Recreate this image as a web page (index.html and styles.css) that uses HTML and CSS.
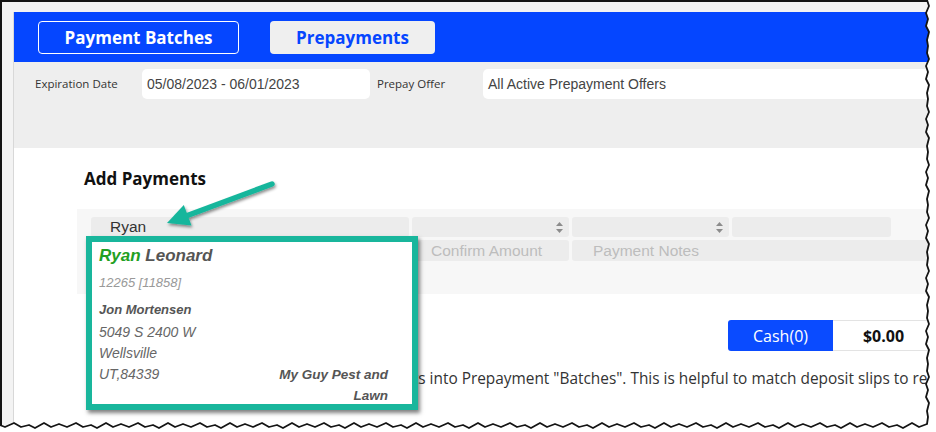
FILE: index.html
```html
<!DOCTYPE html>
<html>
<head>
<meta charset="utf-8">
<link rel="stylesheet" href="styles.css">
</head>
<body>
<div class="shot">
  <div class="window">
    <div class="app">
      <header class="topbar">
        <button class="tab tab-outline">Payment Batches</button>
        <button class="tab tab-active">Prepayments</button>
      </header>
      <div class="filters">
        <span class="flabel lbl-exp">Expiration Date</span>
        <div class="finput date">05/08/2023 - 06/01/2023</div>
        <span class="flabel lbl-offer">Prepay Offer</span>
        <div class="finput offer">All Active Prepayment Offers</div>
      </div>
      <section class="content">
        <h2 class="title">Add Payments</h2>
        <div class="grid">
          <div class="cell">Ryan</div>
          <div class="cell select"><svg class="sort" viewBox="0 0 7 11" width="7" height="11"><path d="M3.5 0 L7 4 L0 4 Z M3.5 11 L7 7 L0 7 Z" fill="#8c8c8c"/></svg></div>
          <div class="cell select"><svg class="sort" viewBox="0 0 7 11" width="7" height="11"><path d="M3.5 0 L7 4 L0 4 Z M3.5 11 L7 7 L0 7 Z" fill="#8c8c8c"/></svg></div>
          <div class="cell"></div>
          <div class="cell row2"></div>
          <div class="cell ph">Confirm Amount</div>
          <div class="cell ph notes">Payment Notes</div>
        </div>
        <div class="totals">
          <div class="cash">Cash(0)</div>
          <div class="sum">$0.00</div>
        </div>
        <p class="note">Enter prepayments here and group payments into Prepayment "Batches". This is helpful to match deposit slips to records.</p>
      </section>
    </div>
  </div>

  <div class="popup">
    <div class="p-name"><span class="p-first">Ryan</span> Leonard</div>
    <div class="p-id">12265 [11858]</div>
    <div class="p-contact">Jon Mortensen</div>
    <div class="p-line p-addr">5049 S 2400 W</div>
    <div class="p-line">Wellsville</div>
    <div class="p-last">
      <div class="p-line">UT,84339</div>
      <div class="p-company">My Guy Pest and Lawn</div>
    </div>
  </div>

  <svg class="overlay" viewBox="0 0 936 432" width="936" height="432">
    <defs>
      <filter id="sh" x="-20%" y="-20%" width="140%" height="160%">
        <feDropShadow dx="1" dy="2" stdDeviation="1.5" flood-color="#000" flood-opacity="0.45"/>
      </filter>
    </defs>
    <g filter="url(#sh)">
      <line x1="272" y1="184" x2="186" y2="216" stroke="#19b69c" stroke-width="5.5" stroke-linecap="round"/>
      <polygon points="167,223 191.5,225.6 183.8,205" fill="#19b69c"/>
    </g>
    <path class="tear-fill" d="M927,0 l2,6 -3,7 2,6 -2,7 3,6 -2,8 1,6 -1,7 2,6 -3,7 2,6 -2,7 3,6 -2,8 1,6 -1,7 2,6 -3,7 2,6 -2,7 3,6 -2,8 1,6 -1,7 2,6 -3,7 2,6 -2,7 3,6 -2,8 1,6 -1,7 2,6 -3,7 2,6 -2,7 3,6 -2,8 1,6 -1,7 2,6 -3,7 2,6 -2,7 3,6 -2,8 1,6 -1,7 2,6 -3,7 2,6 -2,7 3,6 -2,8 1,6 -1,7 2,6 -3,7 2,6 -2,7 3,6 -2,8 1,6 -1,7 l-8,3 -7,-4 -9,5 -6,-3 -8,2 -7,-4 -9,4 -8,-3 -8,3 -7,-4 -9,5 -6,-3 -8,2 -7,-4 -9,4 -8,-3 -8,3 -7,-4 -9,5 -6,-3 -8,2 -7,-4 -9,4 -8,-3 -8,3 -7,-4 -9,5 -6,-3 -8,2 -7,-4 -9,4 -8,-3 -8,3 -7,-4 -9,5 -6,-3 -8,2 -7,-4 -9,4 -8,-3 -8,3 -7,-4 -9,5 -6,-3 -8,2 -7,-4 -9,4 -8,-3 -8,3 -7,-4 -9,5 -6,-3 -8,2 -7,-4 -9,4 -8,-3 -8,3 -7,-4 -9,5 -6,-3 -8,2 -7,-4 -9,4 -8,-3 -8,3 -7,-4 -9,5 -6,-3 -8,2 -7,-4 -9,4 -8,-3 -8,3 -7,-4 -9,5 -6,-3 -8,2 -7,-4 -9,4 -8,-3 -8,3 -7,-4 -9,5 -6,-3 -8,2 -7,-4 -9,4 -8,-3 -8,3 -7,-4 -9,5 -6,-3 -8,2 -7,-4 -9,4 -8,-3 -8,3 -7,-4 -9,5 -6,-3 -8,2 -7,-4 -9,4 -8,-3 -8,3 -7,-4 -9,5 -6,-3 -8,2 -7,-4 -9,4 -8,-3 -8,3 -7,-4 -9,5 -6,-3 -8,2 -7,-4 -9,4 -8,-3 L-3,432 L936,432 L936,0 Z"/>
    <path class="tear-line" d="M927,0 l2,6 -3,7 2,6 -2,7 3,6 -2,8 1,6 -1,7 2,6 -3,7 2,6 -2,7 3,6 -2,8 1,6 -1,7 2,6 -3,7 2,6 -2,7 3,6 -2,8 1,6 -1,7 2,6 -3,7 2,6 -2,7 3,6 -2,8 1,6 -1,7 2,6 -3,7 2,6 -2,7 3,6 -2,8 1,6 -1,7 2,6 -3,7 2,6 -2,7 3,6 -2,8 1,6 -1,7 2,6 -3,7 2,6 -2,7 3,6 -2,8 1,6 -1,7 2,6 -3,7 2,6 -2,7 3,6 -2,8 1,6 -1,7 l-8,3 -7,-4 -9,5 -6,-3 -8,2 -7,-4 -9,4 -8,-3 -8,3 -7,-4 -9,5 -6,-3 -8,2 -7,-4 -9,4 -8,-3 -8,3 -7,-4 -9,5 -6,-3 -8,2 -7,-4 -9,4 -8,-3 -8,3 -7,-4 -9,5 -6,-3 -8,2 -7,-4 -9,4 -8,-3 -8,3 -7,-4 -9,5 -6,-3 -8,2 -7,-4 -9,4 -8,-3 -8,3 -7,-4 -9,5 -6,-3 -8,2 -7,-4 -9,4 -8,-3 -8,3 -7,-4 -9,5 -6,-3 -8,2 -7,-4 -9,4 -8,-3 -8,3 -7,-4 -9,5 -6,-3 -8,2 -7,-4 -9,4 -8,-3 -8,3 -7,-4 -9,5 -6,-3 -8,2 -7,-4 -9,4 -8,-3 -8,3 -7,-4 -9,5 -6,-3 -8,2 -7,-4 -9,4 -8,-3 -8,3 -7,-4 -9,5 -6,-3 -8,2 -7,-4 -9,4 -8,-3 -8,3 -7,-4 -9,5 -6,-3 -8,2 -7,-4 -9,4 -8,-3 -8,3 -7,-4 -9,5 -6,-3 -8,2 -7,-4 -9,4 -8,-3 -8,3 -7,-4 -9,5 -6,-3 -8,2 -7,-4 -9,4 -8,-3 -8,3 -7,-4 -9,5 -6,-3 -8,2 -7,-4 -9,4 -8,-3"/>
  </svg>
</div>
</body>
</html>
```

FILE: styles.css
```css
html, body {
  margin: 0;
  padding: 0;
  background: #fff;
}

.shot {
  width: 936px;
  height: 432px;
  position: relative;
  overflow: hidden;
  background: #fff;
}

.window {
  height: 100%;
  box-sizing: border-box;
  border-top: 2px solid #141414;
  border-left: 2px solid #141414;
  background: #f3f3f3;
  padding: 10px 0 0 11px;
}

.app {
  height: 100%;
  background: #fff;
  border-left: 1px solid #d8d8d8;
  font-family: "Open Sans", "Noto Sans", sans-serif;
}

/* top bar */
.topbar {
  height: 50px;
  background: #0546ff;
  display: flex;
  align-items: center;
  gap: 31px;
  padding-left: 24px;
}

.tab {
  height: 33px;
  box-sizing: border-box;
  font-family: "Open Sans", "Noto Sans", sans-serif;
  font-size: 17px;
  font-weight: 700;
  border-radius: 4px;
  padding: 0;
  display: flex;
  align-items: center;
  justify-content: center;
}

.tab-outline {
  width: 201px;
  border: 1.5px solid #fff;
  background: transparent;
  color: #fff;
}

.tab-active {
  width: 165px;
  border: none;
  background: #efefef;
  color: #0546ff;
}

/* filters */
.filters {
  height: 86px;
  box-sizing: border-box;
  background: #eeeeee;
  padding: 7px 0 0 21px;
  display: flex;
  align-items: flex-start;
}

.flabel {
  font-size: 11.5px;
  color: #333;
  line-height: 30px;
  white-space: nowrap;
}

.lbl-exp { width: 107px; }
.lbl-offer { width: 106px; margin-left: 7px; }

.finput {
  height: 30px;
  box-sizing: border-box;
  background: #fff;
  border-radius: 5px;
  font-family: "Liberation Sans", Arial, sans-serif;
  font-size: 14px;
  color: #444;
  line-height: 30px;
  padding-left: 5px;
  white-space: nowrap;
}

.date { width: 228px; }
.offer { flex: 1; }

/* content */
.content {
  padding-left: 63px;
}

.title {
  margin: 0;
  padding: 19px 0 0 7px;
  font-size: 17px;
  font-weight: 700;
  line-height: 24px;
  color: #111;
}

.grid {
  margin-top: 18px;
  background: #f7f7f7;
  padding: 8px 0 33px 14px;
  display: grid;
  grid-template-columns: 318px 157px 157px 159px 1fr;
  grid-template-rows: 20px 21px;
  gap: 3px;
}

.cell {
  background: #ececec;
  border-radius: 3px;
  font-family: "Liberation Sans", Arial, sans-serif;
  font-size: 15.5px;
  line-height: 20px;
  padding-left: 19px;
  color: #333;
  white-space: nowrap;
}

.select {
  display: flex;
  align-items: center;
  justify-content: flex-end;
  padding-right: 6px;
}

.row2 { grid-column: 1; }
.ph { color: #bdbdbd; line-height: 21px; }
.notes { grid-column: 3 / -1; padding-left: 21px; }

.totals {
  display: flex;
  margin-top: 26px;
  padding-left: 651px;
}

.cash {
  width: 105px;
  height: 31px;
  background: #0a4bff;
  color: #fff;
  font-size: 16px;
  display: flex;
  align-items: center;
  justify-content: center;
  border-radius: 3px 0 0 3px;
}

.sum {
  width: 102px;
  height: 31px;
  box-sizing: border-box;
  border: 1px solid #e3e3e3;
  border-left: none;
  font-size: 16px;
  font-weight: 700;
  color: #111;
  display: flex;
  align-items: center;
  justify-content: center;
}

.note {
  margin: 18px 0 0;
  padding-left: 21px;
  font-size: 15.4px;
  line-height: 20px;
  color: #333;
  white-space: nowrap;
}

/* autocomplete popup */
.popup {
  position: absolute;
  left: 86px;
  top: 236px;
  width: 332px;
  height: 174px;
  box-sizing: border-box;
  border: 6px solid #19b69c;
  background: #fff;
  box-shadow: 2px 3px 4px rgba(0, 0, 0, 0.5);
  padding: 3px 0 0 7px;
  font-family: "Liberation Sans", Arial, sans-serif;
  font-style: italic;
}

.p-name {
  font-size: 17px;
  font-weight: 700;
  line-height: 22px;
  color: #555;
}

.p-first { color: #22a022; }

.p-id {
  margin-top: 6px;
  font-size: 13px;
  line-height: 20px;
  color: #999;
}

.p-contact {
  margin-top: 7px;
  font-size: 13px;
  font-weight: 700;
  line-height: 20px;
  color: #555;
}

.p-line {
  font-size: 14px;
  line-height: 21px;
  color: #666;
}

.p-addr { margin-top: 2px; }

.p-last {
  display: flex;
  justify-content: space-between;
  align-items: flex-start;
}

.p-company {
  width: 124px;
  margin-right: 24px;
  text-align: right;
  font-size: 13.5px;
  font-weight: 700;
  line-height: 21px;
  color: #555;
}

/* annotation overlay: arrow + torn edge */
.overlay {
  position: absolute;
  left: 0;
  top: 0;
  pointer-events: none;
}

.tear-fill { fill: #fff; }

.tear-line {
  fill: none;
  stroke: #141414;
  stroke-width: 1.8;
  stroke-linejoin: round;
}
```
